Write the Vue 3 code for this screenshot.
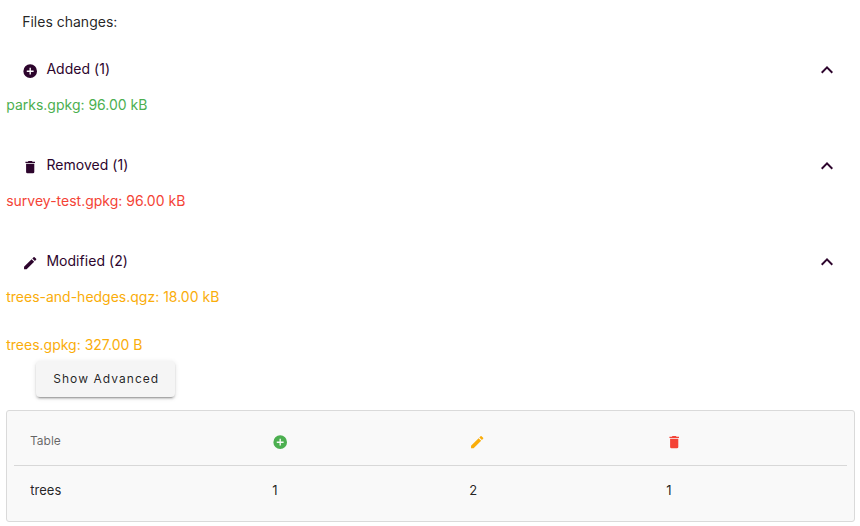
<script setup>
const icons = {
  plus: 'M17 13h-4v4h-2v-4H7v-2h4V7h2v4h4m-5-9A10 10 0 0 0 2 12a10 10 0 0 0 10 10 10 10 0 0 0 10-10A10 10 0 0 0 12 2z',
  trash: 'M19 4h-3.5l-1-1h-5l-1 1H5v2h14M6 19a2 2 0 0 0 2 2h8a2 2 0 0 0 2-2V7H6v12z',
  pencil: 'M20.71 7.04c.39-.39.39-1.04 0-1.41l-2.34-2.34c-.37-.39-1.02-.39-1.41 0l-1.84 1.83 3.75 3.75M3 17.25V21h3.75L17.81 9.93l-3.75-3.75L3 17.25z',
  up: 'M7.41 15.41 12 10.83l4.59 4.58L18 14l-6-6-6 6 1.41 1.41z',
}
const groups = [
  { name: 'Added', icon: 'plus', tone: 'green', files: ['parks.gpkg: 96.00 kB'] },
  { name: 'Removed', icon: 'trash', tone: 'red', files: ['survey-test.gpkg: 96.00 kB'] },
  { name: 'Modified', icon: 'pencil', tone: 'amber', files: ['trees-and-hedges.qgz: 18.00 kB', 'trees.gpkg: 327.00 B'] },
]
const columns = [
  { icon: 'plus', tone: 'green' },
  { icon: 'pencil', tone: 'amber' },
  { icon: 'trash', tone: 'red' },
]
const rows = [['trees', 1, 2, 1]]
</script>

<template>
  <main class="page">
    <div class="title">Files changes:</div>
    <section v-for="g in groups" :key="g.name">
      <header class="head">
        <svg class="icon" viewBox="0 0 24 24"><path :d="icons[g.icon]" /></svg>
        <span class="label">{{ g.name }} ({{ g.files.length }})</span>
        <svg class="chevron" viewBox="0 0 24 24"><path :d="icons.up" /></svg>
      </header>
      <div v-for="f in g.files" :key="f" class="file" :class="g.tone">{{ f }}</div>
    </section>
    <button class="advanced">Show Advanced</button>
    <div class="card">
      <div class="row thead">
        <span class="cell">Table</span>
        <span v-for="c in columns" :key="c.icon" class="cell" :class="c.tone">
          <svg class="icon" viewBox="0 0 24 24"><path :d="icons[c.icon]" /></svg>
        </span>
      </div>
      <div v-for="r in rows" :key="r[0]" class="row">
        <span v-for="(v, i) in r" :key="i" class="cell">{{ v }}</span>
      </div>
    </div>
  </main>
</template>

<style>
body { background: #fff; }
</style>
<style scoped>
.page {
  box-sizing: border-box;
  height: 526px;
  overflow: hidden;
  padding: 0 5px 0 6.2px;
  font: 14px/20px Inter, sans-serif;
  color: #2d052d;
}
.title { padding: 12px 16px 0; height: 33px; color: rgba(0, 0, 0, 0.87); }
.head { display: flex; align-items: center; height: 48px; padding: 0 16px; }
svg { display: block; fill: currentColor; }
.icon { width: 16.4px; height: 16.4px; }
.head .icon { margin: 4px 7.8px 0 0; }
.label { flex: 1; letter-spacing: 0.04px; }
.chevron { width: 24px; height: 24px; margin-top: 2px; }
.file { height: 48px; line-height: 24px; }
.green { color: #4caf50; }
.red { color: #f44336; }
.amber { color: #faad0a; }
.advanced {
  display: block;
  width: 139px;
  height: 36px;
  margin: -20px 0 13px 29.8px;
  padding: 0 0 0 1.5px;
  border: 0;
  border-radius: 4px;
  background: #f5f5f5;
  color: rgba(0, 0, 0, 0.87);
  font: 400 12px/36px Inter, sans-serif;
  letter-spacing: 1.05px;
  box-shadow: 0 3px 1px -2px rgba(0,0,0,.2), 0 2px 2px rgba(0,0,0,.14), 0 1px 5px rgba(0,0,0,.12);
}
.card {
  box-sizing: border-box;
  height: 112px;
  margin-left: -.2px;
  padding: 7px;
  border: 1px solid #dadada;
  border-radius: 3px;
  background: #f9f9f9;
}
.row { display: grid; grid-template-columns: 242px 197px 197px 1fr; height: 49px; align-items: center; font-size: 13px; color: rgba(0,0,0,.87); }
.thead { height: 47px; border-bottom: 1px solid #d8d8d8; font-size: 12px; color: rgba(0,0,0,.6); }
.cell { padding: 0 0 1px 16.3px; }
.thead .cell { padding: 0 0 2px 16px; }
.thead .icon { margin-top: 3px; }
.row .green { color: #4caf50; }
.row .amber { color: #faad0a; }
.row .red { color: #f44336; }
</style>
